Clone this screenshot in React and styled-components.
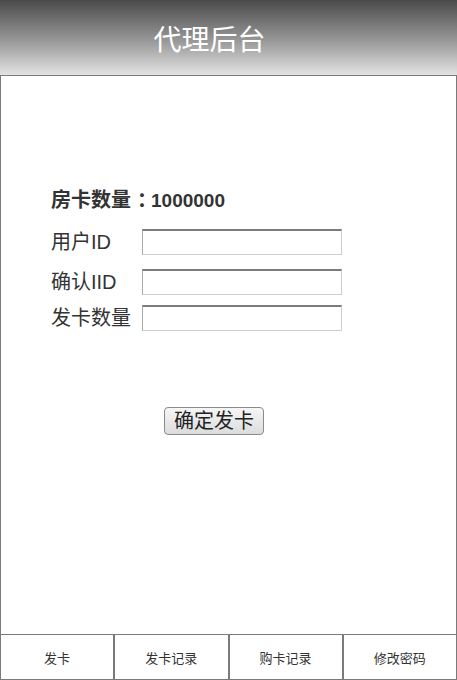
import React from 'react';
import styled, { createGlobalStyle } from 'styled-components';

const GlobalStyle = createGlobalStyle`
  html, body {
    margin: 0;
    padding: 0;
    background: #fff;
  }
  body {
    font-family: "Liberation Sans", "Noto Sans CJK SC", sans-serif;
  }
`;

const Page = styled.div`
  width: 457px;
  height: 680px;
  box-sizing: border-box;
  border-left: 1px solid #7a7a7a;
  border-right: 1px solid #7a7a7a;
  display: flex;
  flex-direction: column;
`;

const Header = styled.header`
  height: 75px;
  flex-shrink: 0;
  background: linear-gradient(to bottom, #4a4a4a 0%, #999 55%, #e3e3e3 100%);
  border-bottom: 1px solid #7a7a7a;
  margin: 0 -1px;
  display: flex;
  align-items: center;
  justify-content: center;
  padding-right: 38px;
`;

const Title = styled.h1`
  margin: 0;
  color: #fff;
  font-size: 28px;
  font-weight: normal;
`;

const Main = styled.main`
  flex: 1;
  padding: 108px 0 0 50px;
`;

const Balance = styled.div`
  font-size: 20px;
  font-weight: bold;
  color: #333;
  margin-bottom: 16px;
`;

const Colon = styled.span`
  padding-left: 6px;
  letter-spacing: -6px;
`;

const Count = styled.span`
  font-size: 19px;
`;

const Row = styled.label`
  display: flex;
  align-items: center;
  height: 26px;
  margin-bottom: ${p => p.$gap}px;
  color: #333;
  font-size: 20px;
`;

const Label = styled.span`
  width: 91px;
  margin-top: -4px;
`;

const Input = styled.input`
  width: 200px;
  height: 26px;
  box-sizing: border-box;
  border: 1px solid #cfcfcf;
  border-top: 2px solid #7c7c7c;
  border-left: 1px solid #a8a8a8;
  padding: 0 4px;
  font-size: 15px;
  outline: none;
`;

const Actions = styled.div`
  padding: 76px 0 0 113px;
`;

const Button = styled.button`
  height: 28px;
  padding: 0 9px;
  font-family: inherit;
  font-size: 20px;
  line-height: 1;
  color: #222;
  border: 1px solid #8a8a8a;
  border-radius: 4px;
  background: linear-gradient(to bottom, #f6f6f6, #dcdcdc);
`;

const Footer = styled.nav`
  height: 46px;
  flex-shrink: 0;
  display: grid;
  grid-template-columns: repeat(4, 1fr);
  border-top: 1px solid #7a7a7a;
  border-bottom: 1px solid #7a7a7a;
  margin: 0 -1px;
  box-sizing: border-box;
`;

const Tab = styled.div`
  display: flex;
  align-items: center;
  justify-content: center;
  font-size: 13px;
  color: #333;
  border-left: 1px solid #7a7a7a;
  border-right: 1px solid #7a7a7a;
`;

const tabs = ['发卡', '发卡记录', '购卡记录', '修改密码'];

export default function App() {
  return (
    <Page>
      <GlobalStyle />
      <Header>
        <Title>代理后台</Title>
      </Header>
      <Main>
        <Balance>
          房卡数量<Colon>：</Colon><Count>1000000</Count>
        </Balance>
        <Row $gap={14}>
          <Label>用户ID</Label>
          <Input />
        </Row>
        <Row $gap={10}>
          <Label>确认IID</Label>
          <Input />
        </Row>
        <Row $gap={0}>
          <Label>发卡数量</Label>
          <Input />
        </Row>
        <Actions>
          <Button>确定发卡</Button>
        </Actions>
      </Main>
      <Footer>
        {tabs.map(t => (
          <Tab key={t}>{t}</Tab>
        ))}
      </Footer>
    </Page>
  );
}
